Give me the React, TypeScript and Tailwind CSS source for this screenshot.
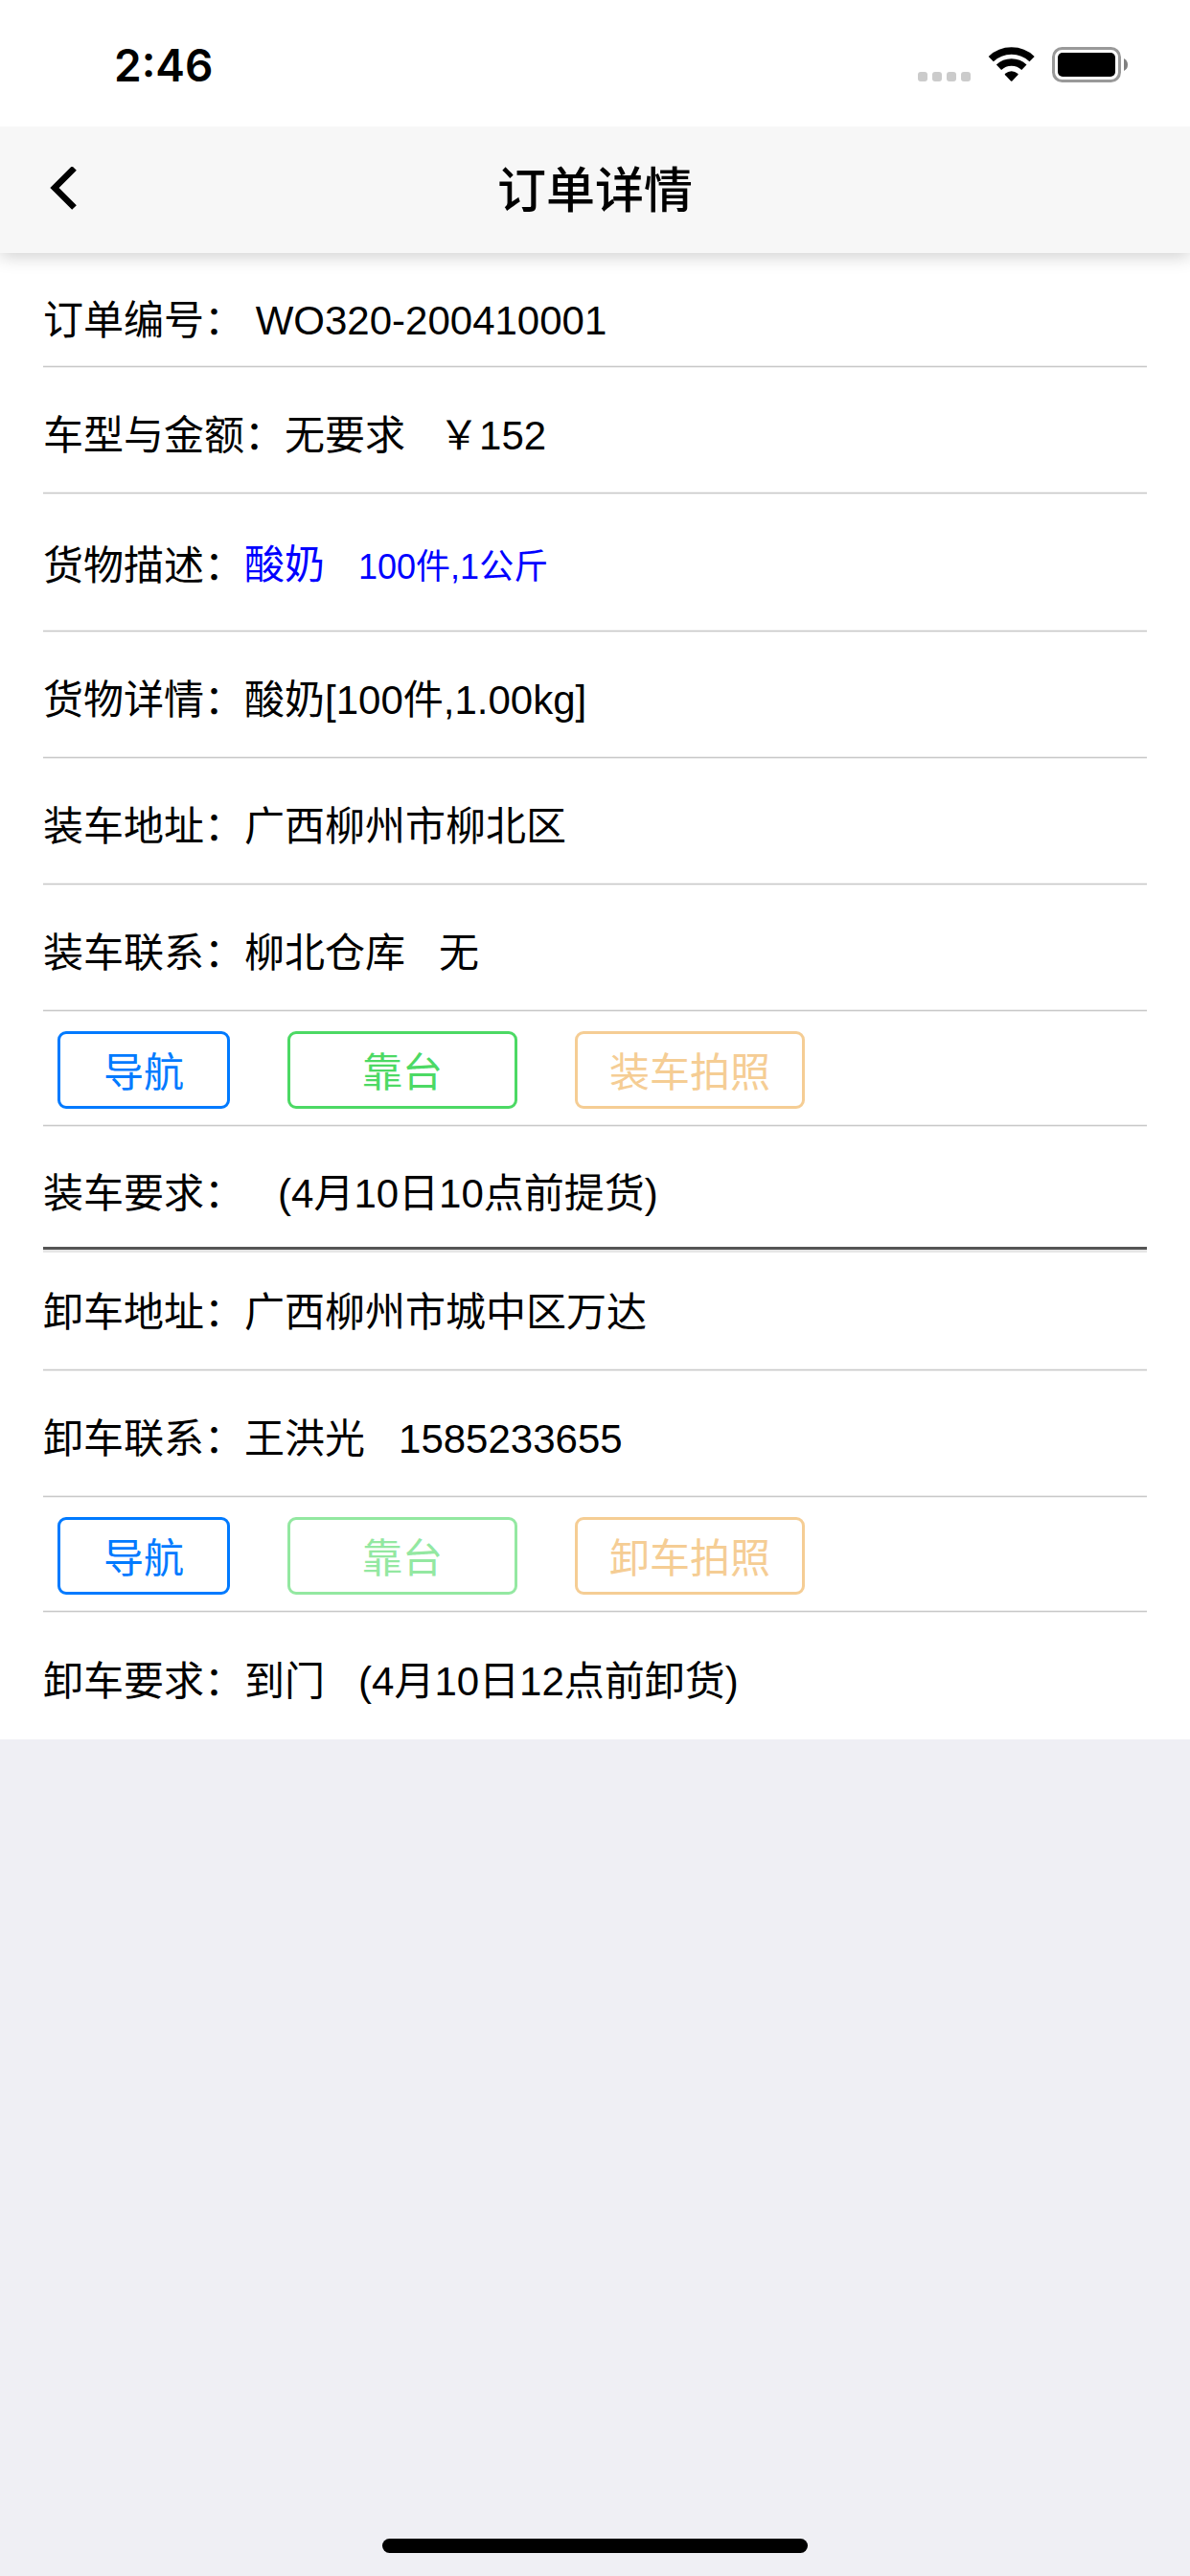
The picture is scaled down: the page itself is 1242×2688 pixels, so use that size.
import type { ReactNode } from 'react';

const actionStyles = {
  blue: 'w-[180px] border-[#007aff] text-[#007aff]',
  green: 'w-60 border-[#4cd964] text-[#4cd964]',
  orange: 'w-60 border-[#f0ad4e] text-[#f0ad4e]',
};

type ActionColor = keyof typeof actionStyles;

interface Action {
  label: string;
  color: ActionColor;
  disabled?: boolean;
}

const loadActions: Action[] = [
  { label: '导航', color: 'blue' },
  { label: '靠台', color: 'green' },
  { label: '装车拍照', color: 'orange', disabled: true },
];

const unloadActions: Action[] = [
  { label: '导航', color: 'blue' },
  { label: '靠台', color: 'green', disabled: true },
  { label: '卸车拍照', color: 'orange', disabled: true },
];

// hairline with a soft edge on both sides
const line = 'border-b border-b-[#c8c8c8] shadow-[0_1px_#efefef,inset_0_-1px_#efefef]';

function StatusBar() {
  return (
    <div className="relative z-10 flex h-[132px] items-center justify-between bg-white pt-1 pr-16 pl-[119px]">
      <span className="font-['Inter',sans-serif] text-[46px] leading-[60px] font-semibold">2:46</span>
      <svg className="h-[38px] w-[220px]" viewBox="0 0 220 38">
        <g fill="#cbcbcb">
          <rect x="0" y="26" width="10" height="10" rx="3" />
          <rect x="15" y="26" width="10" height="10" rx="3" />
          <rect x="30" y="26" width="10" height="10" rx="3" />
          <rect x="45" y="26" width="10" height="10" rx="3" />
        </g>
        <g fill="none" stroke="#000" strokeWidth="7.5">
          <path d="M76.3 12.6A31 31 0 0 1 119.1 12.6" />
          <path d="M84.5 21.3A19 19 0 0 1 110.9 21.3" />
        </g>
        <path d="M90.8 28Q97.7 22.6 104.6 28Q104.8 28.7 104.3 29.3L98.4 35.5Q97.7 36.2 97 35.5L91.1 29.3Q90.6 28.7 90.8 28Z" />
        <rect x="141.5" y="1.5" width="69" height="34" rx="9" fill="none" stroke="#999" strokeWidth="3" />
        <rect x="146" y="6" width="60" height="25" rx="5" />
        <path d="M215 12Q219 14 219 18.5Q219 23 215 25Z" fill="#808080" />
      </svg>
    </div>
  );
}

function Row({ label, className, children }: { label: string; className: string; children: ReactNode }) {
  return (
    <div className={`flex items-center ${className}`}>
      <dt>{label}：</dt>
      <dd className="whitespace-pre">{children}</dd>
    </div>
  );
}

function ActionRow({ actions }: { actions: Action[] }) {
  return (
    <div className={`flex h-[120px] items-center gap-[60px] pt-[3px] pl-[15px] ${line}`}>
      {actions.map(action => (
        <button
          key={action.label}
          disabled={action.disabled}
          className={`h-[81px] rounded-[9px] border-[3px] pt-2 disabled:opacity-60 ${actionStyles[action.color]}`}
        >
          {action.label}
        </button>
      ))}
    </div>
  );
}

export default function App() {
  return (
    <div className="flex min-h-screen flex-col bg-[#efeff4] font-['Liberation_Sans','Noto_Sans_CJK_SC',sans-serif] text-[42px] leading-[60px] text-black">
      <StatusBar />

      {/* Title bar */}
      <header className="relative flex h-[132px] items-center bg-[#f7f7f7] px-12 shadow-[0_3px_18px_rgba(0,0,0,0.2)]">
        <button aria-label="返回" className="flex-none">
          <svg className="h-12 w-8" viewBox="0 0 32 48" fill="none" stroke="#000" strokeWidth="6.6">
            <path d="M29.5 1.5L9 22L29.5 42.5" />
          </svg>
        </button>
        <h1 className="flex-1 pt-1 pr-8 text-center text-[51px] font-medium">订单详情</h1>
      </header>

      <main className="bg-white px-[45px]">
        <dl>
          <Row label="订单编号" className={`h-[119px] pt-6 ${line}`}>{' WO320-200410001'}</Row>
          <Row label="车型与金额" className={`h-[132px] pt-3 ${line}`}>{'无要求   ￥152'}</Row>
          <Row label="货物描述" className={`h-36 pt-2 text-[#0000ff] [&>dt]:text-black ${line}`}>
            {'酸奶   '}<span className="text-[36px]">100件,1公斤</span>
          </Row>
          <Row label="货物详情" className={`h-[132px] pt-3 ${line}`}>酸奶[100件,1.00kg]</Row>
          <Row label="装车地址" className={`h-[132px] pt-3 ${line}`}>广西柳州市柳北区</Row>
          <Row label="装车联系" className={`h-[132px] pt-3 ${line}`}>{'柳北仓库   无'}</Row>
        </dl>
        <ActionRow actions={loadActions} />
        <dl>
          <Row label="装车要求" className="h-[129px] border-b-[3px] border-[#555555] pt-4">
            {'   (4月10日10点前提货)'}
          </Row>
          <Row label="卸车地址" className={`h-[126px] border-t-[3px] border-t-[#e5e5e5] pt-1 ${line}`}>广西柳州市城中区万达</Row>
          <Row label="卸车联系" className={`h-[132px] pt-3 ${line}`}>{'王洪光   1585233655'}</Row>
        </dl>
        <ActionRow actions={unloadActions} />
        <dl>
          <Row label="卸车要求" className="h-[133px] pt-3">{'到门   (4月10日12点前卸货)'}</Row>
        </dl>
      </main>

      {/* Home indicator */}
      <div className="mt-auto mb-6 h-[15px] w-[444px] self-center rounded-full bg-black" />
    </div>
  );
}
